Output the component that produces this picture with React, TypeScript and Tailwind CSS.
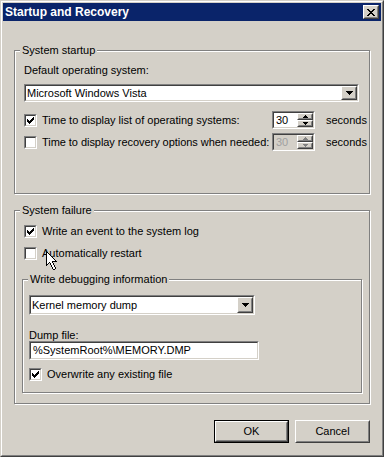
import React from "react";

type Kids = { className?: string; innerClassName?: string; children?: React.ReactNode };

function Sunken({ className = "", innerClassName = "", children }: Kids) {
  return (
    <div className={`border border-t-[#808080] border-l-[#808080] border-r-white border-b-white ${className}`}>
      <div className={`h-full border border-t-[#404040] border-l-[#404040] border-r-[#d4d0c8] border-b-[#d4d0c8] ${innerClassName}`}>
        {children}
      </div>
    </div>
  );
}

function Raised({ className = "", innerClassName = "", children }: Kids) {
  return (
    <div className={`border border-t-white border-l-white border-r-[#404040] border-b-[#404040] bg-[#d4d0c8] ${className}`}>
      <div className={`h-full border border-t-[#d4d0c8] border-l-[#d4d0c8] border-r-[#808080] border-b-[#808080] ${innerClassName}`}>
        {children}
      </div>
    </div>
  );
}

function Pixels({ rows, colors }: { rows: string[]; colors: Record<string, string> }) {
  const w = Math.max(...rows.map((r) => r.length));
  const rects: React.ReactNode[] = [];
  rows.forEach((r, y) => {
    for (let x = 0; x < r.length; x++) {
      const c = colors[r[x]];
      if (c) rects.push(<rect key={`${x}-${y}`} x={x} y={y} width={1} height={1} fill={c} />);
    }
  });
  return (
    <svg width={w} height={rows.length} viewBox={`0 0 ${w} ${rows.length}`} shapeRendering="crispEdges" className="block">
      {rects}
    </svg>
  );
}

const X_ROWS = ["xx....xx", ".xx..xx.", "..xxxx..", "...xx...", "..xxxx..", ".xx..xx.", "xx....xx"];
const DOWN_ROWS = ["xxxxxxx", ".xxxxx.", "..xxx..", "...x..."];
const SUP = ["..x..", ".xxx.", "xxxxx"];
const SDOWN = ["xxxxx", ".xxx.", "..x.."];
const CHECK_ROWS = [
  ".........",
  ".......x.",
  "......xx.",
  ".x...xxx.",
  ".xx.xxx..",
  ".xxxxx...",
  "..xxx....",
  "...x.....",
  ".........",
];
const CURSOR_ROWS = [
  "B",
  "BB",
  "BWB",
  "BWWB",
  "BWWWB",
  "BWWWWB",
  "BWWWWWB",
  "BWWWWWWB",
  "BWWWWWWWB",
  "BWWWWWWWWB",
  "BWWWWWBBBBB",
  "BWWBWWB",
  "BWB.BWWB",
  "BB..BWWB",
  "B....BWWB",
  ".....BWWB",
  "......BWWB",
  "......BWWB",
  ".......BB",
];

function Check({ checked }: { checked: boolean }) {
  return (
    <Sunken className="w-[13px] h-[13px] shrink-0" innerClassName="bg-white">
      {checked && <Pixels rows={CHECK_ROWS} colors={{ x: "#000" }} />}
    </Sunken>
  );
}

function Combo({ text, className = "" }: { text: string; className?: string }) {
  return (
    <Sunken className={className} innerClassName="bg-white flex">
      <div className="flex-1 pl-[1px] flex items-center leading-[13px] whitespace-nowrap">{text}</div>
      <Raised className="w-[16px] h-full" innerClassName="flex items-center justify-center">
        <Pixels rows={DOWN_ROWS} colors={{ x: "#000" }} />
      </Raised>
    </Sunken>
  );
}

function Spin({ disabled = false }: { disabled?: boolean }) {
  const c = disabled ? "#808080" : "#000";
  return (
    <Sunken className="w-[43px] h-[18px] shrink-0" innerClassName={`flex ${disabled ? "bg-[#d4d0c8]" : "bg-white"}`}>
      <div className={`flex-1 pl-[2px] flex items-center leading-[13px] ${disabled ? "text-[#a0a0a0]" : "text-black"}`}>30</div>
      <div className="w-[16px] h-full flex flex-col">
        <Raised className="flex-1" innerClassName="flex items-center justify-center">
          <Pixels rows={SUP} colors={{ x: c }} />
        </Raised>
        <Raised className="flex-1" innerClassName="flex items-center justify-center">
          <Pixels rows={SDOWN} colors={{ x: c }} />
        </Raised>
      </div>
    </Sunken>
  );
}

function Group({ label, className = "", children }: { label: string; className?: string; children?: React.ReactNode }) {
  return (
    <div className={`relative border border-[#808080] shadow-[inset_1px_1px_0_#fff,1px_1px_0_#fff] shrink-0 ${className}`}>
      <span className="absolute -top-[7px] left-[5px] bg-[#d4d0c8] px-[2px] leading-[13px] whitespace-nowrap">{label}</span>
      {children}
    </div>
  );
}

function CheckRow({ checked, label, className = "", children }: { checked: boolean; label: string; className?: string; children?: React.ReactNode }) {
  return (
    <div className={`relative flex items-center h-[13px] ${className}`}>
      <Check checked={checked} />
      <span className="ml-[5px] leading-[13px] whitespace-nowrap">{label}</span>
      {children}
    </div>
  );
}

function Button({ label, isDefault = false }: { label: string; isDefault?: boolean }) {
  const inner = (
    <Raised className="w-full h-full" innerClassName="flex items-center justify-center leading-[13px]">
      {label}
    </Raised>
  );
  return isDefault ? (
    <div className="w-[75px] h-[23px] border border-black">{inner}</div>
  ) : (
    <div className="w-[75px] h-[23px]">{inner}</div>
  );
}

export default function App() {
  return (
    <div className="w-[384px] h-[457px] font-['Liberation_Sans',Arial,sans-serif] text-[11px] text-black">
      <div className="w-full h-full border border-t-[#d4d0c8] border-l-[#d4d0c8] border-r-[#404040] border-b-[#404040]">
        <div className="w-full h-full border border-t-white border-l-white border-r-[#808080] border-b-[#808080] p-[1px] bg-[#d4d0c8] flex flex-col">
          {/* Title bar */}
          <div className="h-[18px] shrink-0 bg-[#0a246a] flex items-center pl-[2px] pr-[2px]">
            <span className="flex-1 text-white font-bold text-[12px] leading-[14px] whitespace-nowrap">Startup and Recovery</span>
            <Raised className="w-[16px] h-[14px]" innerClassName="flex items-center justify-center">
              <Pixels rows={X_ROWS} colors={{ x: "#000" }} />
            </Raised>
          </div>

          {/* Body */}
          <div className="flex-1 px-[11px] pt-[29px] flex flex-col">
            <Group label="System startup" className="h-[144px]">
              <div className="pl-[9px] pt-[13px] flex flex-col">
                <div className="leading-[13px]">Default operating system:</div>
                <Combo text="Microsoft Windows Vista" className="mt-[7px] w-[335px] h-[18px]" />
                <div className="mt-[9px] flex items-center h-[18px]">
                  <Check checked />
                  <span className="ml-[5px] w-[230px] whitespace-nowrap leading-[13px]">Time to display list of operating systems:</span>
                  <Spin />
                  <span className="ml-[11px] leading-[13px]">seconds</span>
                </div>
                <div className="mt-[4px] flex items-center h-[18px]">
                  <Check checked={false} />
                  <span className="ml-[5px] w-[230px] whitespace-nowrap leading-[13px] tracking-[-0.05px]">Time to display recovery options when needed:</span>
                  <Spin disabled />
                  <span className="ml-[11px] leading-[13px]">seconds</span>
                </div>
              </div>
            </Group>

            <Group label="System failure" className="mt-[16px] h-[194px]">
              <div className="pl-[7px] pt-[14px] flex flex-col">
                <CheckRow checked label="Write an event to the system log" className="ml-[2px]" />
                <CheckRow checked={false} label="Automatically restart" className="ml-[2px] mt-[9px]">
                  <div className="absolute left-[22px] top-[4px]">
                    <Pixels rows={CURSOR_ROWS} colors={{ B: "#000", W: "#fff" }} />
                  </div>
                </CheckRow>
                <Group label="Write debugging information" className="mt-[19px] w-[340px] h-[114px]">
                  <div className="pl-[6px] pt-[15px] flex flex-col">
                    <Combo text="Kernel memory dump" className="w-[226px] h-[20px]" />
                    <div className="mt-[14px] leading-[12px]">Dump file:</div>
                    <Sunken className="w-[230px] h-[19px]" innerClassName="bg-white flex items-center pl-[2px] leading-[13px]">
                      %SystemRoot%\MEMORY.DMP
                    </Sunken>
                    <CheckRow checked label="Overwrite any existing file" className="mt-[8px]" />
                  </div>
                </Group>
              </div>
            </Group>

            <div className="mt-[16px] flex justify-end gap-[6px]">
              <Button label="OK" isDefault />
              <Button label="Cancel" />
            </div>
          </div>
        </div>
      </div>
    </div>
  );
}
